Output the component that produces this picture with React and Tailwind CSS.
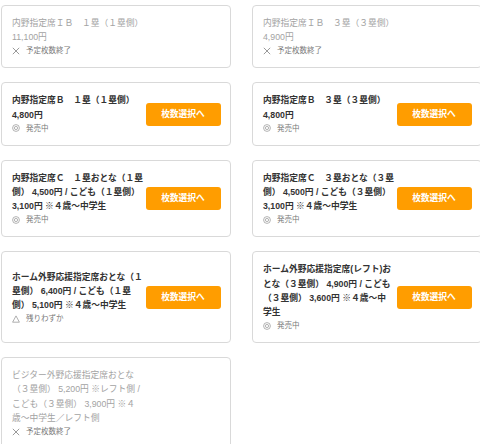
import React from "react";

const FONT = { fontFamily: '"Liberation Sans", "Noto Sans CJK JP", sans-serif' };

const cards = [
  { title: "内野指定席ＩＢ　１塁（１塁側）", price: "11,100円", status: "sold" },
  { title: "内野指定席ＩＢ　３塁（３塁側）", price: "4,900円", status: "sold" },
  { title: "内野指定席Ｂ　１塁（１塁側）", price: "4,800円", status: "on" },
  { title: "内野指定席Ｂ　３塁（３塁側）", price: "4,800円", status: "on" },
  { title: "内野指定席Ｃ　１塁おとな（１塁側） 4,500円 / こども（１塁側） 3,100円 ※４歳～中学生", status: "on" },
  { title: "内野指定席Ｃ　３塁おとな（３塁側） 4,500円 / こども（３塁側） 3,100円 ※４歳～中学生", status: "on" },
  { title: "ホーム外野応援指定席おとな（１塁側） 6,400円 / こども（１塁側） 5,100円 ※４歳～中学生", status: "few" },
  { title: "ホーム外野応援指定席(レフト)おとな（３塁側） 4,900円 / こども（３塁側） 3,600円 ※４歳～中学生", status: "on" },
  { title: "ビジター外野応援指定席おとな（３塁側） 5,200円 ※レフト側 / こども（３塁側） 3,900円 ※４歳～中学生／レフト側", status: "sold" },
];

function StatusIcon({ kind }) {
  if (kind === "sold") {
    return (
      <svg width="8" height="8" viewBox="0 0 8 8" className="shrink-0">
        <path d="M0.8 0.8 L7.2 7.2 M7.2 0.8 L0.8 7.2" stroke="#8f8f8f" strokeWidth="0.9" fill="none" />
      </svg>
    );
  }
  if (kind === "few") {
    return (
      <svg width="8" height="8" viewBox="0 0 8 8" className="shrink-0">
        <path d="M4 0.9 L7.4 7.2 L0.6 7.2 Z" stroke="#9a9a9a" strokeWidth="0.8" fill="none" strokeLinejoin="round" />
      </svg>
    );
  }
  return (
    <svg width="8" height="8" viewBox="0 0 8 8" className="shrink-0">
      <circle cx="4" cy="4" r="3.4" stroke="#a0a0a0" strokeWidth="0.8" fill="none" />
      <circle cx="4" cy="4" r="1.6" stroke="#a0a0a0" strokeWidth="0.8" fill="none" />
    </svg>
  );
}

const statusText = { sold: "予定枚数終了", on: "発売中", few: "残りわずか" };

function Card({ title, price, status }) {
  const sold = status === "sold";
  return (
    <div className="flex items-center rounded-[4px] border border-[#d9d9d9] bg-white py-[10px] pl-[10px] pr-[9px]">
      <div className="w-[131.5px] shrink-0">
        <p
          className={
            sold
              ? "text-[8.75px] leading-[14.2px] text-[#a3a3a3]"
              : "text-[8.75px] font-bold leading-[14.2px] text-[#333333]"
          }
        >
          {title}
        </p>
        {price && (
          <p
            className={
              sold
                ? "text-[8.75px] leading-[14.2px] text-[#a3a3a3]"
                : "text-[8.75px] font-bold leading-[14.2px] text-[#333333]"
            }
          >
            {price}
          </p>
        )}
        <div
          className={
            sold
              ? "flex items-center gap-[6px] text-[7.5px] leading-[13px] text-[#7a7a7a]"
              : "flex items-center gap-[6px] text-[7.5px] leading-[13px] text-[#777777]"
          }
        >
          <StatusIcon kind={status} />
          <span>{statusText[status]}</span>
        </div>
      </div>
      {!sold && (
        <button className="ml-[2px] flex h-[23px] w-[75px] shrink-0 items-center justify-center rounded-[3px] bg-[#ff9d00] text-[8.75px] font-bold text-white">
          枚数選択へ
        </button>
      )}
    </div>
  );
}

export default function App() {
  return (
    <div lang="ja" style={FONT} className="h-[444px] w-[480px] overflow-hidden bg-white">
      <div className="grid grid-cols-[230px_230px] gap-x-[21px] gap-y-[14px] pl-px pt-[5px]">
        {cards.map((c, i) => (
          <Card key={i} {...c} />
        ))}
      </div>
    </div>
  );
}
